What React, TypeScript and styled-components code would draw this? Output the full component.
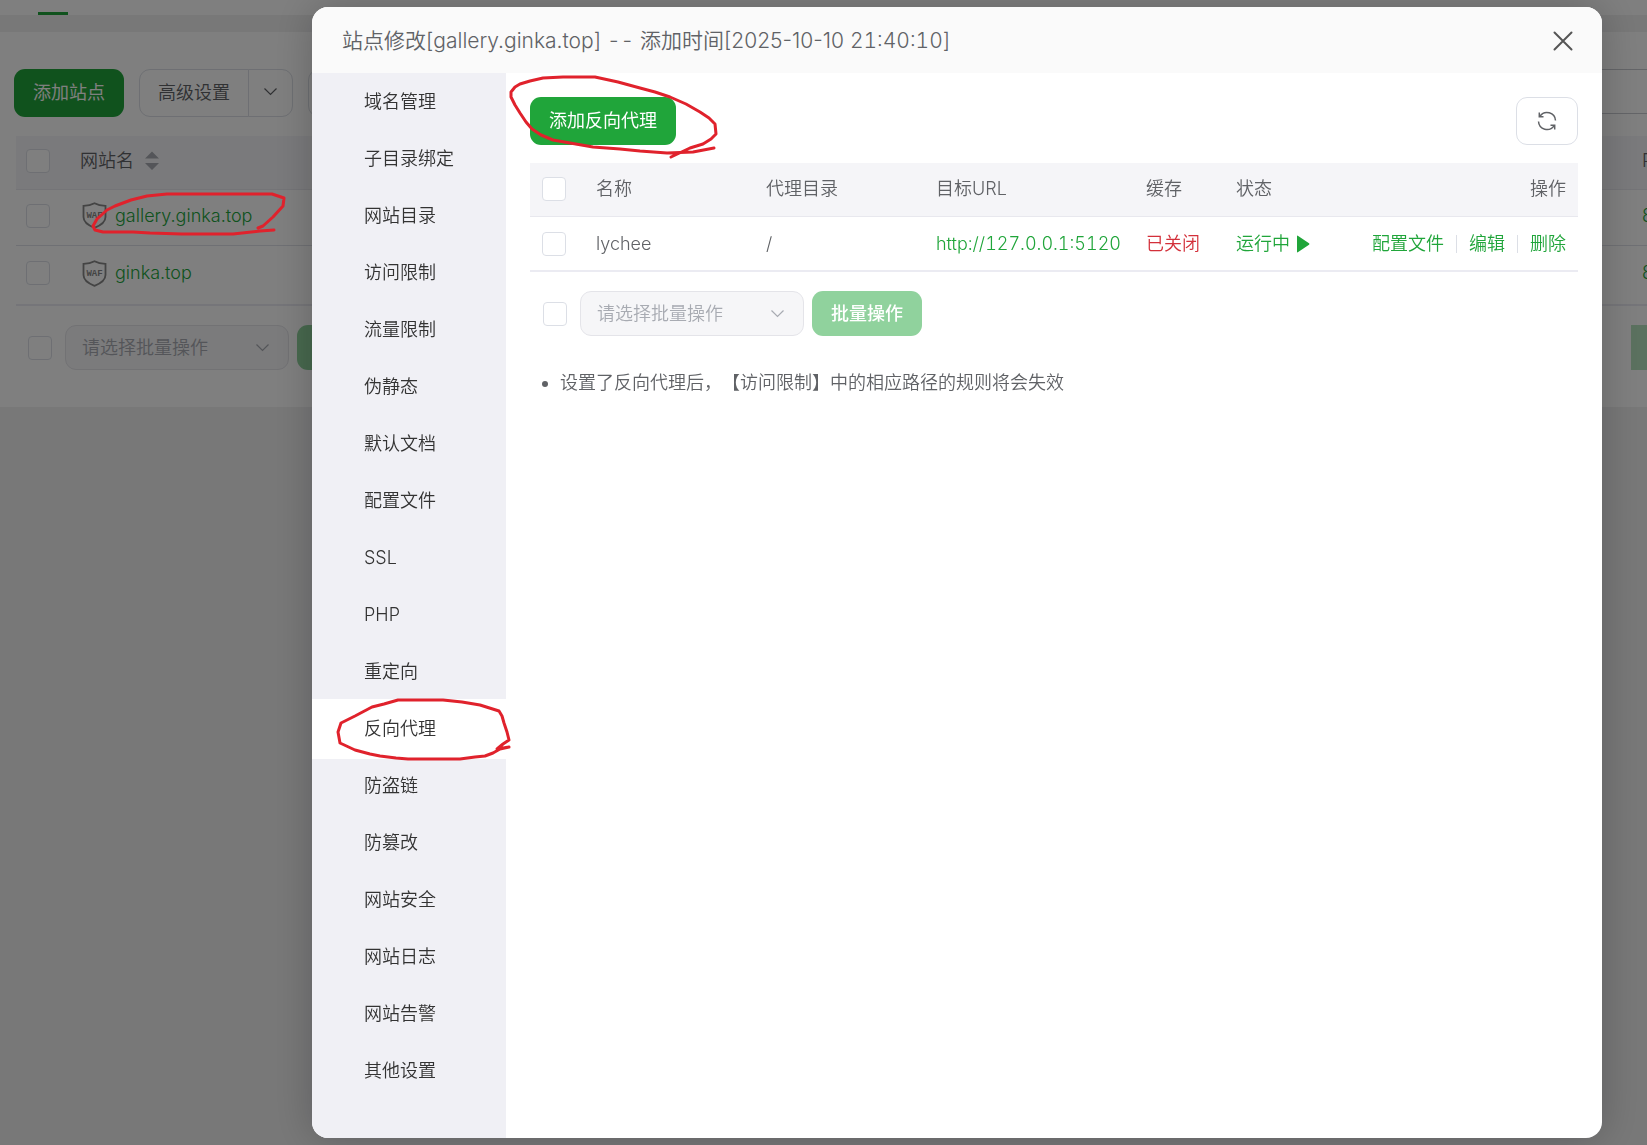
import React from "react";
import styled, { createGlobalStyle, css } from "styled-components";

const GREEN = "#20a53a";

const GlobalStyle = createGlobalStyle`
  *, *::before, *::after { box-sizing: border-box; }
  html, body { margin: 0; height: 100%; }
  body {
    overflow: hidden;
    background: #f0f0f1;
    color: #606266;
    font: 350 18px/24px Inter, "Noto Sans CJK SC", sans-serif;
    text-spacing-trim: space-all;
  }
  #root { height: 100%; }
  button, select, input { font: inherit; }
`;

/* ---------- shared controls ---------- */

const Button = styled.button<{ $kind?: "primary" | "muted"; $compact?: boolean }>`
  flex: none;
  height: ${(p) => (p.$compact ? 45 : 48)}px;
  padding: 0 18px;
  border: 1px solid #dcdfe6;
  border-radius: 11px;
  background: #fff;
  color: #606266;
  white-space: nowrap;
  ${(p) =>
    p.$kind &&
    css`
      padding: 0 19px;
      border: 0;
      background: ${p.$kind === "primary" ? GREEN : "#90d29d"};
      color: #fff;
      font-weight: ${p.$kind === "primary" ? 400 : 500};
    `}
`;

const Checkbox = styled.input.attrs({ type: "checkbox" })`
  appearance: none;
  display: block;
  flex: none;
  width: 24px;
  height: 24px;
  margin: 0;
  border: 1px solid #dcdfe6;
  border-radius: 4px;
  background: #fff;
`;

const SelectBox = styled.div`
  display: grid;
  flex: none;
  width: 224px;
  height: 45px;
  align-items: center;

  > * { grid-area: 1 / 1; }
  > svg { justify-self: end; margin-right: 19px; pointer-events: none; }
`;

const Select = styled.select`
  appearance: none;
  width: 100%;
  height: 100%;
  padding: 0 40px 0 16px;
  border: 1px solid #e4e4e9;
  border-radius: 11px;
  background: #f6f6f8;
  color: #a8abb2;
  opacity: 1;
`;

const Chevron = () => (
  <svg width="15" height="15" viewBox="0 0 15 15" fill="none" stroke="currentColor" strokeWidth="1.2">
    <path d="M1.5 4.5 7.5 10.5 13.5 4.5" />
  </svg>
);

const BatchSelect = () => (
  <SelectBox>
    <Select disabled aria-label="批量操作类型" defaultValue="">
      <option value="">请选择批量操作</option>
    </Select>
    <Chevron />
  </SelectBox>
);

const BatchRow = styled.div<{ $left: number }>`
  display: flex;
  align-items: center;
  gap: 8px;
  margin-top: 19px;
  padding-left: ${(p) => p.$left}px;
  color: #a8abb2;

  > input { margin-right: 5px; }
`;

const Table = styled.table`
  width: 100%;
  table-layout: fixed;
  border-collapse: separate;
  border-spacing: 0;
  border-bottom: 2px solid #ebebf2;
  white-space: nowrap;
  text-align: left;

  th, td { height: 53px; padding: 0 12px; font-weight: inherit; }
  th { height: 54px; padding-bottom: 1px; background: #f5f5f8; border-bottom: 1px solid #e8e8ee; }
`;

/* ---------- page behind the dialog ---------- */

const Page = styled.div`
  height: 100%;
  overflow: hidden;
`;

const TabBar = styled.nav`
  display: flex;
  align-items: flex-end;
  height: 15px;
  padding-left: 38px;
  background: #fff;
`;

const ActiveTab = styled.span`
  width: 30px;
  height: 3px;
  background: ${GREEN};
`;

const Card = styled.section`
  height: 375px;
  margin-top: 17px;
  padding: 37px 0 0 14px;
  overflow: hidden;
  background: #fff;
`;

const Toolbar = styled.div`
  display: flex;
  gap: 15px;
  margin-bottom: 19px;
`;

const SplitButton = styled.div`
  display: flex;

  > button:first-child { border-radius: 11px 0 0 11px; }
  > button:last-child {
    width: 45px;
    margin-left: -1px;
    padding: 0 14px;
    border-radius: 0 11px 11px 0;
  }
`;

const Search = styled.input`
  width: 320px;
  height: 45px;
  margin-left: auto;
  border: 1px solid #c8cad0;
  border-right: 0;
  background: #fff;
`;

const SiteTableWrap = styled.div`
  margin: 0 -40px 0 2px;

  th, td { padding-bottom: 4px; }
  th:first-child, td:first-child { padding-left: 10px; }
  td { height: 56px; border-bottom: 1px solid #dfe1e8; }
  tr:last-child td { height: 58px; border-bottom: 0; }
`;

const Inline = styled.span<{ $gap: number }>`
  display: inline-flex;
  align-items: center;
  gap: ${(p) => p.$gap}px;
  vertical-align: middle;
`;

const SiteName = styled(Inline)`
  padding-left: 2px;
`;

const Link = styled.a`
  color: ${GREEN};
  text-decoration: none;
`;

const Figures = styled.span`
  font-variant-numeric: tabular-nums;
`;

const PagerButton = styled.button`
  width: 16px;
  height: 45px;
  margin-left: auto;
  padding: 0;
  border: 0;
  background: #b6e2be;
`;

const WafIcon = () => (
  <svg width="25" height="27" viewBox="0 0 25 27" fill="none" stroke="#888" strokeWidth="1.8">
    <path d="M12.5 1.2C9 3.2 5.500 3.800 1.500 3.800V15c0 5 5 8.500 11 10.800 6-2.300 11-5.800 11-10.800V3.800c-4 0-7.500-.6-11-2.600Z" />
    <text x="12.500" y="16" fill="#888" stroke="none" fontSize="9" fontWeight="700" fontFamily="Liberation Mono, monospace" textAnchor="middle">WAF</text>
  </svg>
);

const SortIcon = () => (
  <svg width="14" height="20" viewBox="0 0 14 20" fill="#a8abb2">
    <path d="M0 7.500 7 0.500l7 7ZM0 12h14l-7 7Z" />
  </svg>
);

const sites = ["gallery.ginka.top", "ginka.top"];

const SitesPage = () => (
  <Page>
    <TabBar><ActiveTab /></TabBar>
    <Card>
      <Toolbar>
        <Button $kind="primary">添加站点</Button>
        <SplitButton>
          <Button>高级设置</Button>
          <Button aria-label="更多设置"><Chevron /></Button>
        </SplitButton>
        <Button aria-label="更多" />
        <Search aria-label="搜索站点" />
      </Toolbar>
      <SiteTableWrap>
        <Table>
          <colgroup>
            <col style={{ width: 52 }} />
            <col />
            <col style={{ width: 57 }} />
          </colgroup>
          <thead>
            <tr>
              <th><Checkbox aria-label="全选站点" /></th>
              <th><Inline $gap={11}>网站名<SortIcon /></Inline></th>
              <th>PHP</th>
            </tr>
          </thead>
          <tbody>
            {sites.map((site) => (
              <tr key={site}>
                <td><Checkbox aria-label={site} /></td>
                <td><SiteName $gap={8}><WafIcon /><Link href="#">{site}</Link></SiteName></td>
                <td><Link href="#">8.2</Link></td>
              </tr>
            ))}
          </tbody>
        </Table>
      </SiteTableWrap>
      <BatchRow $left={14}>
        <Checkbox aria-label="批量选择站点" />
        <BatchSelect />
        <Button $kind="muted" $compact aria-label="批量操作" />
        <PagerButton aria-label="下一页" />
      </BatchRow>
    </Card>
  </Page>
);

/* ---------- dialog ---------- */

const Overlay = styled.div`
  position: fixed;
  inset: 0;
  display: flex;
  padding: 7px 45px 7px 312px;
  background: rgba(0, 0, 0, 0.5);
`;

const Dialog = styled.section`
  display: flex;
  flex: 1;
  flex-direction: column;
  min-width: 0;
  overflow: hidden;
  border-radius: 16px;
  background: #fff;
  box-shadow: 0 0 40px rgba(0, 0, 0, 0.22);
`;

const DialogHeader = styled.header`
  display: flex;
  flex: none;
  align-items: center;
  justify-content: space-between;
  height: 66px;
  padding: 1px 29px 0 30px;
  background: #fafafa;
`;

const Title = styled.h1`
  margin: 0;
  font-size: 21px;
  line-height: 28px;
  font-weight: inherit;
`;

const CloseButton = styled.button`
  display: flex;
  padding: 0;
  border: 0;
  background: none;
  color: #555;
`;

const DialogBody = styled.div`
  display: flex;
  flex: 1;
  min-height: 0;
`;

const Menu = styled.nav`
  display: flex;
  flex: none;
  flex-direction: column;
  width: 194px;
  background: #f0f0f5;
`;

const MenuItem = styled.a<{ $active?: boolean }>`
  height: 57px;
  padding-left: 52px;
  color: #333;
  line-height: 58px;
  text-decoration: none;
  ${(p) =>
    p.$active &&
    css`
      background: #fff;
      box-shadow: 0 -1px 0 #fff, 0 2px 0 #fff;
    `}
`;

const Content = styled.main`
  flex: 1;
  min-width: 0;
  padding: 24px;
`;

const ContentBar = styled.div`
  display: flex;
  justify-content: space-between;
  margin-bottom: 18px;
`;

const RefreshButton = styled(Button)`
  display: flex;
  align-items: center;
  justify-content: center;
  width: 62px;
  padding: 0;
`;

const Danger = styled.span`
  color: #d3303a;
`;

const Right = styled.div`
  display: flex;
  justify-content: flex-end;
`;

const Action = styled(Link)`
  & + & {
    margin-left: 12px;
    padding-left: 13px;
    background: linear-gradient(#dcdfe6, #dcdfe6) 0 3px / 1px 18px no-repeat;
  }
`;

const Notes = styled.ul`
  margin: 35px 0 0;
  padding-left: 30px;
`;

const RefreshIcon = () => (
  <svg width="20" height="20" viewBox="0 0 20 20" fill="none" stroke="currentColor" strokeWidth="1.5">
    <path d="M18.500 9.500A8.500 8.500 0 0 0 3 5.200M1.500 10.500A8.500 8.500 0 0 0 17 14.800" />
    <path d="M2.300 1.500V5.700H6.500M17.700 18.500V14.300H13.500" />
  </svg>
);

const menu = [
  "域名管理", "子目录绑定", "网站目录", "访问限制", "流量限制", "伪静态",
  "默认文档", "配置文件", "SSL", "PHP", "重定向", "反向代理",
  "防盗链", "防篡改", "网站安全", "网站日志", "网站告警", "其他设置",
];

const columns = [54, 170, 170, 210, 90, 110];

const SiteDialog = () => (
  <Overlay>
    <Dialog role="dialog" aria-labelledby="dialog-title">
      <DialogHeader>
        <Title id="dialog-title">
          站点修改[gallery.ginka.top] <Figures>--</Figures> 添加时间[2025-10-10 <Figures>21:40:10</Figures>]
        </Title>
        <CloseButton aria-label="关闭">
          <svg width="20" height="20" viewBox="0 0 20 20" stroke="currentColor" strokeWidth="2" strokeLinecap="round">
            <path d="M1.500 1.500l17 17M18.500 1.500l-17 17" />
          </svg>
        </CloseButton>
      </DialogHeader>
      <DialogBody>
        <Menu>
          {menu.map((item) => (
            <MenuItem key={item} href="#" $active={item === "反向代理"}>{item}</MenuItem>
          ))}
        </Menu>
        <Content>
          <ContentBar>
            <Button $kind="primary">添加反向代理</Button>
            <RefreshButton aria-label="刷新"><RefreshIcon /></RefreshButton>
          </ContentBar>
          <Table>
            <colgroup>
              {columns.map((width, i) => <col key={i} style={{ width }} />)}
              <col />
            </colgroup>
            <thead>
              <tr>
                <th><Checkbox aria-label="全选代理" /></th>
                <th>名称</th>
                <th>代理目录</th>
                <th>目标URL</th>
                <th>缓存</th>
                <th>状态</th>
                <th><Right>操作</Right></th>
              </tr>
            </thead>
            <tbody>
              <tr>
                <td><Checkbox aria-label="lychee" /></td>
                <td>lychee</td>
                <td>/</td>
                <td><Link href="#"><Figures>http://127.0.0.1:5120</Figures></Link></td>
                <td><Danger>已关闭</Danger></td>
                <td>
                  <Link href="#">
                    <Inline $gap={6}>
                      运行中
                      <svg width="14" height="18" viewBox="0 0 14 18" fill="currentColor">
                        <path d="M1 1.500Q1 0 2.200 1L13 8.200Q14 9 13 9.800L2.200 17Q1 18 1 16.500Z" />
                      </svg>
                    </Inline>
                  </Link>
                </td>
                <td>
                  <Right>
                    <Action href="#">配置文件</Action>
                    <Action href="#">编辑</Action>
                    <Action href="#">删除</Action>
                  </Right>
                </td>
              </tr>
            </tbody>
          </Table>
          <BatchRow $left={13}>
            <Checkbox aria-label="批量选择代理" />
            <BatchSelect />
            <Button $kind="muted" $compact disabled>批量操作</Button>
          </BatchRow>
          <Notes>
            <li>设置了反向代理后，【访问限制】中的相应路径的规则将会失效</li>
          </Notes>
        </Content>
      </DialogBody>
    </Dialog>
  </Overlay>
);

/* ---------- hand-drawn marks over the page ---------- */

const Marks = styled.svg`
  position: fixed;
  top: 0;
  left: 0;
  width: 100%;
  height: 100%;
  fill: none;
  stroke: #e0222c;
  stroke-width: 3;
  stroke-linecap: round;
  stroke-linejoin: round;
  pointer-events: none;
`;

const App = () => (
  <>
    <GlobalStyle />
    <SitesPage />
    <SiteDialog />
    <Marks aria-hidden="true">
      <path d="M274 230 260 231 233 234H182L150 233 133 232 103 232 95 230 93 226 97 219 107 210 115 206 123 203 131 200 147 196 167 194H272L284 198 283 206 273 217 263 226 258 228" />
      <path d="M714 148 693 152 667 153 640 151 620 149 593 147 570 143 553 140 541 135 532 129 526 122 520 113 515 105 511 97 511 92 515 87 520 84 530 81 543 78 563 77H595L618 82 640 88 655 92 670 97 686 104 700 112 709 118 715 124 716 134 711 139 703 144 690 148 671 157" />
      <path d="M509 747 497 749 503 744 509 740 507 732 504 723 502 716 499 711 480 705 462 702 443 700H398L384 704 372 707 355 716 341 723 338 732 340 743 355 750 370 754 380 756 396 758 408 759H460L475 757 485 756 493 753 500 749 509 747" />
    </Marks>
  </>
);

export default App;
